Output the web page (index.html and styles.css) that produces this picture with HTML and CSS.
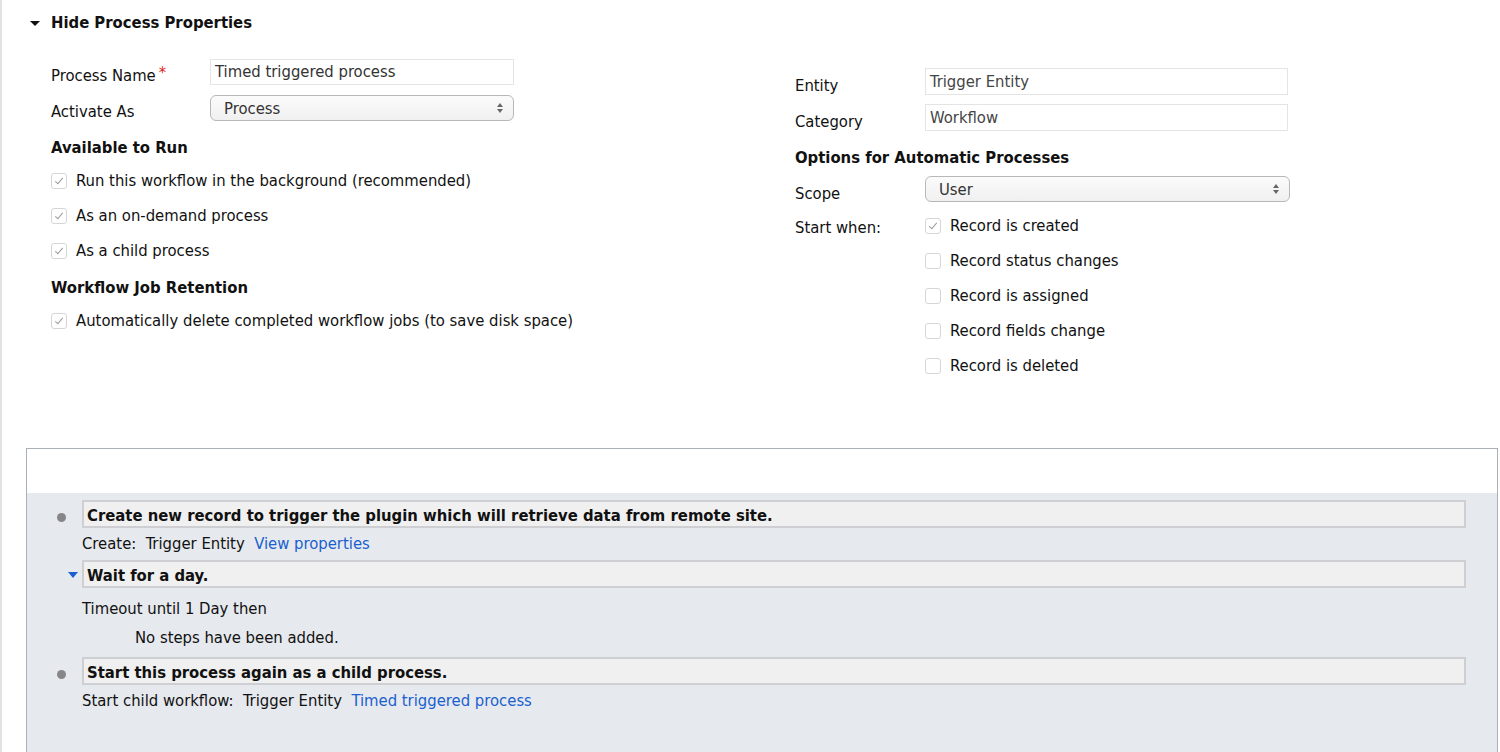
FILE: index.html
```html
<!DOCTYPE html>
<html>
<head>
<meta charset="utf-8">
<link rel="stylesheet" href="styles.css">
</head>
<body>
<div class="page">
  <div class="section-head">
    <span class="caret"></span>
    <span class="section-title">Hide Process Properties</span>
  </div>
  <div class="props">
    <div class="col col-left">
      <div class="frow">
        <div class="flabel">Process Name<span class="req">*</span></div>
        <div class="input">Timed triggered process</div>
      </div>
      <div class="frow">
        <div class="flabel">Activate As</div>
        <div class="select"><span>Process</span><span class="arrows"><svg width="8" height="12" viewBox="0 0 8 12"><path d="M4 1L7 5H1Z M4 11L7 7H1Z" fill="#666"/></svg></span></div>
      </div>
      <div class="subhead sh-avail">Available to Run</div>
      <div class="check-row"><span class="cb on"></span>Run this workflow in the background (recommended)</div>
      <div class="check-row"><span class="cb on"></span>As an on-demand process</div>
      <div class="check-row"><span class="cb on"></span>As a child process</div>
      <div class="subhead sh-ret">Workflow Job Retention</div>
      <div class="check-row"><span class="cb on"></span>Automatically delete completed workflow jobs (to save disk space)</div>
    </div>
    <div class="col col-right">
      <div class="frow">
        <div class="flabel rl">Entity</div>
        <div class="input rinput">Trigger Entity</div>
      </div>
      <div class="frow">
        <div class="flabel rl">Category</div>
        <div class="input rinput">Workflow</div>
      </div>
      <div class="subhead sh-opt">Options for Automatic Processes</div>
      <div class="frow scope-row">
        <div class="flabel rl">Scope</div>
        <div class="select rselect"><span>User</span><span class="arrows"><svg width="8" height="12" viewBox="0 0 8 12"><path d="M4 1L7 5H1Z M4 11L7 7H1Z" fill="#666"/></svg></span></div>
      </div>
      <div class="start-when">
        <div class="flabel rl sw-label">Start when:</div>
        <div class="sw-list">
          <div class="check-row"><span class="cb on"></span>Record is created</div>
          <div class="check-row"><span class="cb"></span>Record status changes</div>
          <div class="check-row"><span class="cb"></span>Record is assigned</div>
          <div class="check-row"><span class="cb"></span>Record fields change</div>
          <div class="check-row"><span class="cb"></span>Record is deleted</div>
        </div>
      </div>
    </div>
  </div>

  <div class="designer">
    <div class="designer-top"></div>
    <div class="steps">
      <div class="step">
        <div class="marker"><span class="dot"></span></div>
        <div class="step-title">Create new record to trigger the plugin which will retrieve data from remote site.</div>
      </div>
      <div class="step-detail">Create:&nbsp; Trigger Entity&nbsp; <span class="link">View properties</span></div>
      <div class="step">
        <div class="marker marker-tri"><span class="tri"></span></div>
        <div class="step-title">Wait for a day.</div>
      </div>
      <div class="step-detail timeout">Timeout until 1 Day then</div>
      <div class="no-steps">No steps have been added.</div>
      <div class="step">
        <div class="marker"><span class="dot"></span></div>
        <div class="step-title">Start this process again as a child process.</div>
      </div>
      <div class="step-detail">Start child workflow:&nbsp; Trigger Entity&nbsp; <span class="link">Timed triggered process</span></div>
    </div>
  </div>
</div>
</body>
</html>
```
FILE: styles.css
```css
html, body {
  margin: 0;
  padding: 0;
  background: #ffffff;
  height: 100%;
  overflow: hidden;
}
body {
  font-family: "DejaVu Sans Condensed", "DejaVu Sans", sans-serif;
  font-size: 16.5px;
  color: #111;
}
.page {
  border-left: 2px solid #e2e2e2;
  height: 100%;
  box-sizing: border-box;
}
.section-head {
  display: flex;
  align-items: center;
  height: 20px;
  padding-top: 12px;
  padding-left: 28px;
}
.caret {
  width: 0;
  height: 0;
  border-left: 5px solid transparent;
  border-right: 5px solid transparent;
  border-top: 5px solid #111;
  margin-right: 11px;
  margin-top: 2px;
}
.section-title {
  font-weight: bold;
}
.props {
  display: flex;
  padding-left: 49px;
  padding-top: 27px;
  height: 389px;
  box-sizing: border-box;
}
.col-left {
  width: 744px;
  display: flex;
  flex-direction: column;
}
.col-right {
  padding-top: 9px;
  display: flex;
  flex-direction: column;
}
.frow {
  display: flex;
  margin-bottom: 10px;
}
.col-right .frow {
  margin-bottom: 9px;
}
.flabel {
  width: 159px;
  height: 26px;
  padding-top: 8px;
  line-height: 18px;
  box-sizing: border-box;
  white-space: nowrap;
}
.rl {
  width: 130px;
  height: 27px;
  padding-top: 9px;
}
.req {
  color: #e02020;
  margin-left: 3px;
  position: relative;
  top: -3px;
}
.input {
  width: 304px;
  height: 26px;
  box-sizing: border-box;
  border: 1px solid #e4e4e4;
  padding: 0 4px;
  line-height: 24px;
  color: #333;
}
.rinput {
  width: 363px;
  height: 27px;
  line-height: 25px;
  color: #444;
}
.select {
  width: 304px;
  height: 26px;
  box-sizing: border-box;
  border: 1px solid #b8b8b8;
  border-radius: 6px;
  background: linear-gradient(#fbfbfb, #f0f0f0);
  display: flex;
  align-items: center;
  justify-content: space-between;
  padding: 0 9px 0 13px;
  color: #333;
}
.rselect {
  width: 365px;
}
.arrows {
  display: flex;
}
.subhead {
  font-weight: bold;
  line-height: 20px;
}
.sh-avail {
  margin-top: 7px;
  margin-bottom: 5px;
}
.sh-ret {
  margin-top: 10px;
  margin-bottom: 5px;
}
.sh-opt {
  margin-top: 8px;
  margin-bottom: 8px;
}
.check-row {
  display: flex;
  align-items: center;
  height: 35px;
  color: #111;
  white-space: nowrap;
}
.cb {
  width: 16px;
  height: 16px;
  box-sizing: border-box;
  border: 1px solid #d6d6d6;
  border-radius: 3px;
  margin-right: 9px;
  background: #fff;
  position: relative;
  flex: none;
}
.cb.on::after {
  content: "";
  position: absolute;
  left: 5px;
  top: 2px;
  width: 3px;
  height: 7px;
  border-right: 1.2px solid #9a9a9a;
  border-bottom: 1.2px solid #9a9a9a;
  transform: rotate(40deg);
}
.scope-row {
  margin-bottom: 0;
}
.col-right .scope-row {
  margin-bottom: 5px;
}
.start-when {
  display: flex;
}
.sw-label {
  padding-top: 11px;
  height: auto;
}
.sw-list {
  display: flex;
  flex-direction: column;
}

.designer {
  margin-left: 24px;
  margin-top: 27px;
  margin-right: 2px;
  border: 1px solid #a9b0b8;
  border-bottom: none;
  height: 320px;
}
.designer-top {
  height: 44px;
  background: #fff;
}
.steps {
  background: #e6e9ee;
  height: 100%;
  padding-top: 7px;
  padding-right: 31px;
}
.step {
  display: flex;
  align-items: center;
}
.marker {
  width: 55px;
  display: flex;
  justify-content: flex-start;
  padding-left: 30px;
  box-sizing: border-box;
}
.dot {
  width: 9px;
  height: 9px;
  border-radius: 50%;
  background: #868686;
  margin-top: 7px;
}
.marker-tri {
  padding-left: 41px;
}
.tri {
  width: 0;
  height: 0;
  border-left: 5px solid transparent;
  border-right: 5px solid transparent;
  border-top: 6px solid #1d5fd1;
  margin-top: 1px;
}
.step-title {
  flex: 1;
  height: 28px;
  box-sizing: border-box;
  border: 2px solid #cdcfd2;
  background: #f0f0f0;
  font-weight: bold;
  padding-top: 3px;
  line-height: 21px;
  padding-left: 3px;
  white-space: nowrap;
}
.step-detail {
  padding-left: 55px;
  height: 32px;
  line-height: 32px;
}
.timeout {
  height: 42px;
  line-height: 42px;
}
.no-steps {
  padding-left: 108px;
  height: 27px;
  line-height: 16px;
}
.link {
  color: #1a5fcf;
}
```
